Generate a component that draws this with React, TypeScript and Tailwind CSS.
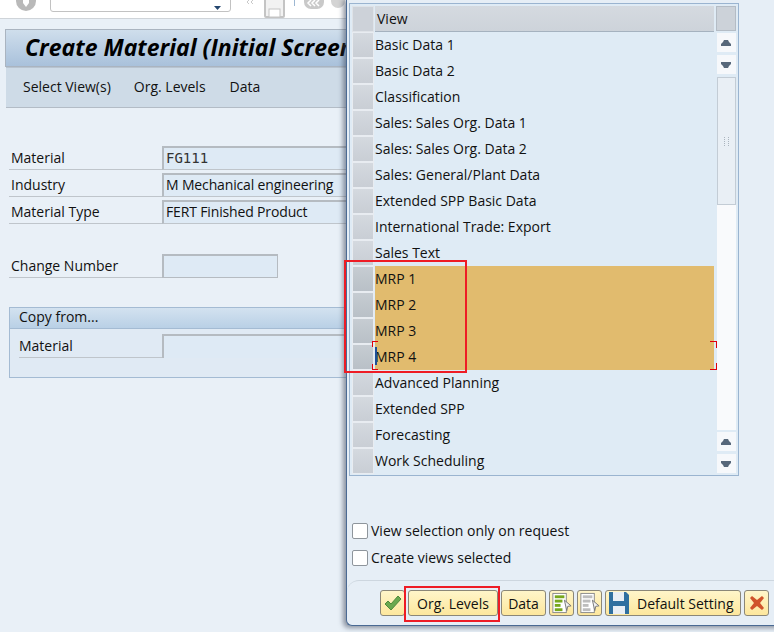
const views = [
  "Basic Data 1",
  "Basic Data 2",
  "Classification",
  "Sales: Sales Org. Data 1",
  "Sales: Sales Org. Data 2",
  "Sales: General/Plant Data",
  "Extended SPP Basic Data",
  "International Trade: Export",
  "Sales Text",
  "MRP 1",
  "MRP 2",
  "MRP 3",
  "MRP 4",
  "Advanced Planning",
  "Extended SPP",
  "Forecasting",
  "Work Scheduling",
]

const selected = ["MRP 1", "MRP 2", "MRP 3", "MRP 4"]

const FormRow = ({ label, value, mono }: { label: string; value?: string; mono?: boolean }) => (
  <div className="flex h-[27px] items-end pl-[9px]">
    <div className="h-[24px] w-[153px] border-b border-[#bfc5cb] pl-[2px] text-[14px] leading-[23px] text-[#111]">{label}</div>
    <div
      className={`h-[24px] flex-1 border-b border-[#bfc5cb] border-t-2 border-l-2 border-t-[#b5bbc1] border-l-[#b5bbc1] bg-[#deeaf5] pl-[2px] leading-[20px] text-[#111] ${
        mono ? "font-['DejaVu_Sans_Mono',monospace] text-[14px] text-[#333]" : "text-[14px] tracking-[-0.15px]"
      }`}
    >
      {value}
    </div>
  </div>
)

const ArrowUp = () => (
  <svg width="10" height="6" viewBox="0 0 10 6">
    <path d="M3 0h4l1 2 2 2v2H0V4l2-2z" fill="#56677a" />
  </svg>
)

const ArrowDown = () => (
  <svg width="10" height="6" viewBox="0 0 10 6">
    <path d="M0 0h10v2L8 4 7 6H3L2 4 0 2z" fill="#56677a" />
  </svg>
)

const ScrollButton = ({ children }: { children: React.ReactNode }) => (
  <div className="mx-auto flex h-[19px] w-[19px] items-center justify-center bg-[#f6f8fb]">{children}</div>
)

const ListIcon = ({ color }: { color: string }) => (
  <svg width="24" height="24" viewBox="0 0 24 24">
    <rect x="3" y="2" width="14" height="20" fill="#fff" stroke="#8a8a8a" />
    <rect x="5" y="4" width="10" height="3" fill={color} />
    <rect x="5" y="8.5" width="8" height="3" fill={color} />
    <rect x="5" y="13" width="6" height="3" fill={color} />
    <rect x="5" y="17.5" width="8" height="3" fill={color} />
    <path d="M15 9l7 6-3.5.5-1 4.5z" fill="#f2f2f2" stroke="#777" />
  </svg>
)

const ToolButton = ({ children, className }: { children: React.ReactNode; className: string }) => (
  <div
    className={`flex h-[26px] items-center justify-center rounded-[3px] border border-[#8b8778] bg-gradient-to-b from-[#fff5c9] to-[#fde79d] text-[14px] text-[#111] ${className}`}
  >
    {children}
  </div>
)

export default function App() {
  return (
    <div className="relative flex h-[632px] w-[774px] flex-col overflow-hidden bg-[#e9f0f7] font-['Open_Sans','Liberation_Sans',sans-serif]">
      {/* top system toolbar */}
      <div className="h-[19px] shrink-0 overflow-hidden border-b border-[#cfd4d9] bg-white">
        <div className="flex items-start">
          <svg className="ml-[16px] mt-[-9px] shrink-0" width="20" height="20" viewBox="0 0 20 20">
            <circle cx="10" cy="10" r="10" fill="#b9b9b9" />
            <path d="M7 3h6v9l-3 4-3-4z" fill="#fff" />
          </svg>
          <div className="relative ml-[14px] mt-[-2px] h-[14px] w-[181px] rounded-b-[3px] border border-[#c2c2c2] bg-white">
            <svg className="absolute right-[9px] top-[7px]" width="7" height="4" viewBox="0 0 7 4">
              <path d="M0 0h7L3.5 4z" fill="#24466e" />
            </svg>
          </div>
          <svg className="ml-[15px] shrink-0" width="8" height="4" viewBox="0 0 8 4">
            <path d="M3 0L1 2l2 2M7 0L5 2l2 2" fill="none" stroke="#c9c9c9" />
          </svg>
          <svg className="ml-[10px] shrink-0" width="21" height="18" viewBox="0 0 21 18">
            <path d="M1 0v16a1 1 0 001 1h17a1 1 0 001-1V0" fill="#f2f2f2" stroke="#c4c4c4" strokeWidth="2" />
            <rect x="5" y="9" width="11" height="8" fill="#fff" stroke="#c4c4c4" />
          </svg>
          <div className="ml-[9px] h-[6px] w-px shrink-0 bg-[#9db7d2]" />
          <svg className="ml-[9px] shrink-0" width="20" height="9" viewBox="0 0 20 9">
            <path d="M0 0h20v2a7 7 0 01-7 7H7a7 7 0 01-7-7z" fill="#c9c9c9" />
            <path d="M7 0L4 3l3 3M11 0L8 3l3 3M15 0l-3 3 3 3" fill="none" stroke="#fff" strokeWidth="1.5" />
          </svg>
          <div className="ml-[7px] mt-[-6px] h-[14px] w-[14px] shrink-0 rounded-full bg-[#d4d4d4]" />
        </div>
      </div>

      {/* main window */}
      <div className="ml-[5px] mt-[10px] h-[38px] shrink-0 overflow-hidden whitespace-nowrap border border-[#aab4c0] bg-gradient-to-b from-[#cfdeec] to-[#a9c1db] pl-[19px] text-[23px] font-bold italic leading-[34px] text-black">
        Create Material (Initial Screen)
      </div>
      <div className="ml-[6px] flex h-[41px] shrink-0 items-center border-b border-[#b3bcc6] border-t border-t-[#b8c4d0] bg-[#cedbe7] pb-[2px] pl-[17px] text-[14px] text-[#111]">
        <span className="mr-[23px]">Select View(s)</span>
        <span className="mr-[24px]">Org. Levels</span>
        <span>Data</span>
      </div>

      <div className="mt-[35px] w-[347px]">
        <FormRow label="Material" value="FG111" mono />
        <FormRow label="Industry" value="M Mechanical engineering" />
        <FormRow label="Material Type" value="FERT Finished Product" />
      </div>

      <div className="mt-[30px] flex h-[24px] w-[347px] pl-[9px]">
        <div className="w-[153px] border-b border-[#bfc5cb] pl-[2px] text-[14px] leading-[23px] text-[#111]">Change Number</div>
        <div className="w-[116px] border border-[#b5bbc1] border-l-2 border-t-2 bg-[#deeaf5]" />
      </div>

      <div className="ml-[9px] mt-[29px] h-[71px] w-[338px] border border-[#a4bbd3] bg-[#e0eaf4]">
        <div className="h-[21px] border-b border-[#a4bbd3] bg-gradient-to-b from-[#d3e2f0] to-[#b9d0e6] pl-[9px] text-[14px] leading-[18px] text-[#111]">
          Copy from...
        </div>
        <div className="mt-[5px] flex h-[24px] pl-[9px]">
          <div className="w-[143px] border-b border-[#bfc5cb] text-[14px] leading-[24px] text-[#111]">Material</div>
          <div className="flex-1 border-l-2 border-t-2 border-[#b5bbc1] bg-[#deeaf5]" />
        </div>
      </div>

      {/* popup dialog over the main window */}
      <div className="absolute left-[346px] top-[-2px] flex h-[628px] w-[440px] flex-col rounded-bl-[6px] border-b border-l border-[#4a6a94] bg-[#e6eef6] shadow-[-3px_2px_5px_rgba(60,70,90,0.55)]">
        <div className="ml-[2px] mt-[5px] flex h-[473px] w-[390px] shrink-0 border border-[#9ab4d0] bg-[#dfebf5]">
          {/* row selectors */}
          <div className="w-[25px] shrink-0 pl-[2px] pt-[2px]">
            <div className="h-[26px] w-[22px] border border-[#dfe3e8] bg-[#cdd2d9]" />
            {views.map((v) => (
              <div
                key={v}
                className={`h-[26px] w-[22px] border border-[#e8ecf1] bg-gradient-to-b ${
                  selected.includes(v) ? "from-[#c6ccd2] to-[#b9c0c7]" : "from-[#d4d9df] to-[#c9ced5]"
                }`}
              />
            ))}
          </div>

          <div className="w-[339px] shrink-0 pt-[2px]">
            <div className="h-[26px] border-b border-[#a5b2bf] bg-gradient-to-b from-[#d5dae0] to-[#cdd3da] pl-[2px] text-[14px] leading-[26px] text-[#111]">
              View
            </div>
            {views.map((v) => (
              <div
                key={v}
                className={`relative h-[26px] whitespace-nowrap text-[14px] leading-[25px] text-[#111] ${
                  selected.includes(v) ? "bg-[#e1bb6e]" : ""
                }`}
              >
                {v}
                {v === "MRP 4" && (
                  <>
                    <div className="absolute left-[-3px] top-[-3px] h-[6px] w-[6px] border-l border-t border-[#e0000a]" />
                    <div className="absolute bottom-[0px] left-[-3px] h-[6px] w-[6px] border-b border-l border-[#e0000a]" />
                    <div className="absolute left-[0px] top-[3px] h-[18px] w-[2px] bg-[#1f4f96]" />
                    <div className="absolute right-[-3px] top-[-3px] h-[7px] w-[7px] border-r border-t border-[#e0000a]" />
                    <div className="absolute bottom-[0px] right-[-3px] h-[7px] w-[7px] border-b border-r border-[#e0000a]" />
                  </>
                )}
              </div>
            ))}
          </div>

          {/* vertical scrollbar */}
          <div className="flex flex-1 flex-col pt-[2px]">
            <div className="mx-auto h-[25px] w-[20px] border border-[#b4bcc5] bg-[#ccd2d9]" />
            <div className="mt-[2px]">
              <ScrollButton>
                <ArrowUp />
              </ScrollButton>
            </div>
            <div className="mt-[3px]">
              <ScrollButton>
                <ArrowDown />
              </ScrollButton>
            </div>
            <div className="mx-auto mt-[3px] w-[19px] flex-1 bg-[#f9fafc]">
              <div className="flex h-[128px] items-center justify-center border border-[#c3ccd5] bg-[#e9eff5]">
                <div className="h-[9px] w-[5px] border-x border-dotted border-[#aab4be]" />
              </div>
            </div>
            <div className="mt-[2px]">
              <ScrollButton>
                <ArrowUp />
              </ScrollButton>
            </div>
            <div className="mb-[2px] mt-[3px]">
              <ScrollButton>
                <ArrowDown />
              </ScrollButton>
            </div>
          </div>
        </div>

        <div className="ml-[5px] mt-[47px] flex flex-col gap-[11px] text-[14px] leading-[16px] text-[#111]">
          <label className="flex items-center gap-[3px]">
            <span className="h-[16px] w-[16px] rounded-[2px] border border-[#8e959c] bg-white" />
            View selection only on request
          </label>
          <label className="flex items-center gap-[3px]">
            <span className="h-[16px] w-[16px] rounded-[2px] border border-[#8e959c] bg-white" />
            Create views selected
          </label>
        </div>

        <div className="mt-[14px] flex flex-1 items-start gap-[3px] rounded-tl-[12px] border-t border-[#cdd6df] pl-[33px] pt-[9px]">
          <ToolButton className="w-[25px]">
            <svg width="18" height="16" viewBox="0 0 18 16">
              <path d="M1 9l3-3 3 3 7-8 3 3-10 11z" fill="#6aa84f" stroke="#4d8a3a" />
            </svg>
          </ToolButton>
          <ToolButton className="w-[90px]">Org. Levels</ToolButton>
          <ToolButton className="w-[45px]">Data</ToolButton>
          <ToolButton className="w-[25px]">
            <ListIcon color="#78a81e" />
          </ToolButton>
          <ToolButton className="w-[25px]">
            <ListIcon color="#bdbdbd" />
          </ToolButton>
          <ToolButton className="w-[136px] justify-start gap-[8px] pl-[3px]">
            <svg width="20" height="22" viewBox="0 0 20 22">
              <path d="M0 0h17l3 3v19H0z" fill="#2f6f9f" />
              <rect x="4" y="0" width="11" height="9" fill="#e8eef5" />
              <rect x="4" y="14" width="12" height="8" fill="#e8eef5" />
            </svg>
            Default Setting
          </ToolButton>
          <ToolButton className="w-[25px]">
            <svg width="16" height="16" viewBox="0 0 16 16">
              <path d="M1 3l2-2 5 4 5-4 2 2-4 5 4 5-2 2-5-4-5 4-2-2 4-5z" fill="#d0532b" />
            </svg>
          </ToolButton>
        </div>
      </div>

      {/* hand drawn red marks on the screenshot */}
      <div className="absolute left-[344px] top-[260px] h-[113px] w-[123px] border-2 border-[#ee1c25]" />
      <div className="absolute left-[404px] top-[586px] h-[36px] w-[96px] border-2 border-[#ee1c25]" />
    </div>
  )
}
